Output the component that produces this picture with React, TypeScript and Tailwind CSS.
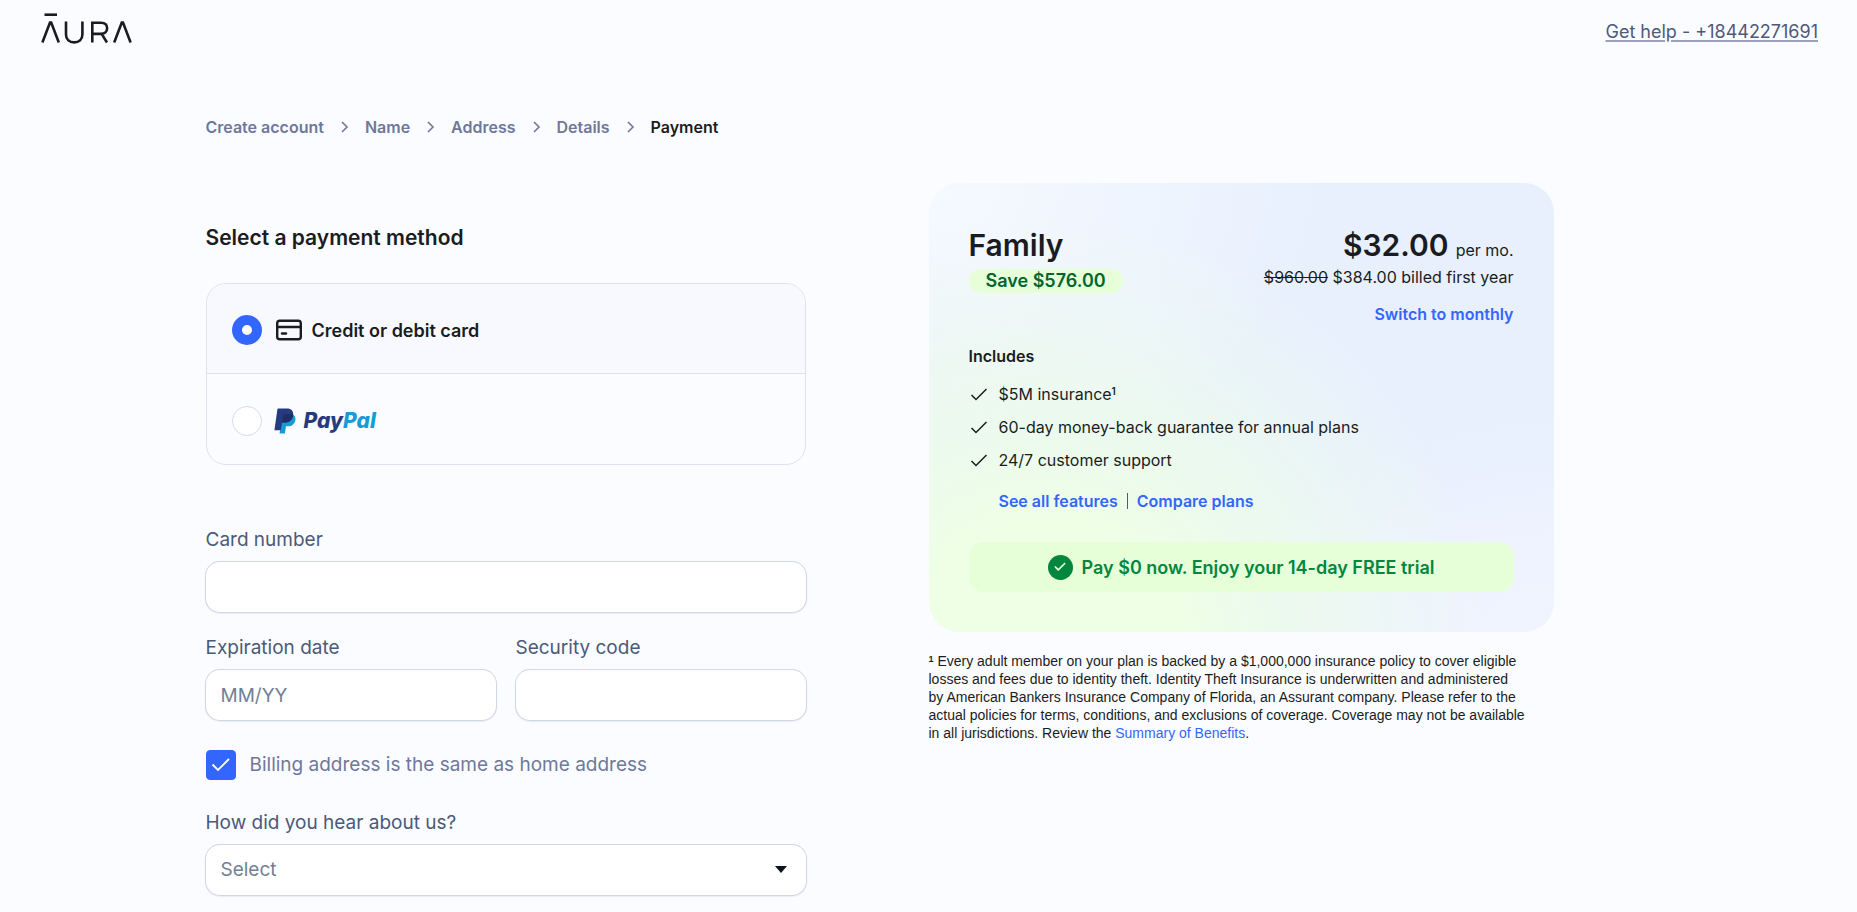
import React, { useState } from "react";
import { Check } from "lucide-react";

const steps = ["Create account", "Name", "Address", "Details", "Payment"];

const field =
  "block h-[50px] w-full rounded-[14px] bg-white px-[15px] text-[19px] text-[#4a5a78] placeholder:text-[#718096] ring-1 ring-[#cfd6e6] shadow-[0_1px_1px_1px_rgba(207,214,230,0.4)] outline-none focus:ring-2 focus:ring-[#3366ff]";
const label = "mb-2.5 block text-[19px] leading-6 text-[#4a5a78]";

function AuraLogo() {
  return (
    <svg width="92" height="32" viewBox="0 0 92 32" fill="none" stroke="#1a1c22" strokeWidth="2.6" role="img" aria-label="Aura">
      <path d="M3.5 1.7H16" />
      <path d="M1.4 29.5 9 9.6h1.2l7.6 19.9" />
      <path d="M25 8.5v13c0 5 3.4 7.9 8.2 7.9s8.2-2.9 8.2-7.9v-13" />
      <path d="M51.3 29.5V9.8h8.6c3.9 0 6.2 2.1 6.2 5.5s-2.3 5.6-6.2 5.6h-8.6M60.6 20.9l5.4 8.6" />
      <path d="M73.2 29.5 80.8 9.6H82l7.6 19.9" />
    </svg>
  );
}

function PayPalLogo() {
  return (
    <span className="flex items-center gap-2">
      <svg width="22" height="26" viewBox="0 0 22 26" aria-hidden="true">
        <path fill="#179bd7" d="M9 6.2h9.4c2.4 1.2 3.4 3.2 3 5.8-.8 4.2-3.6 6.3-7.4 6.3h-2l-1.1 7.100H5.500z" />
        <path fill="#253b80" d="M4.3.4H13c4.2 0 6.8 2.5 6.2 6.900-.8 4.900-3.900 7.300-8.200 7.300H8.100L6.800 22.300H.4L3.400 1.200c.1-.5.4-.8.9-.8z" />
        <path fill="#222d65" d="M10.3 6.2h7.3c.7 0 1.2.2 1.6.6-.7 5.200-3.900 7.800-8.200 7.800H8.100l1.200-7.500c.1-.6.4-.9 1-.9z" />
      </svg>
      <span className="text-[21px] leading-6 font-extrabold text-[#253b80] italic">
        Pay<span className="text-[#179bd7]">Pal</span>
      </span>
    </span>
  );
}

function CardIcon() {
  return (
    <svg width="26" height="22" viewBox="0 0 26 22" fill="none" stroke="#1a1c22" strokeWidth="2.4" aria-hidden="true">
      <rect x="1.2" y="1.7" width="23.6" height="18.6" rx="2.6" />
      <path d="M1.2 8h23.6" />
      <path d="M6 14.5h4" strokeLinecap="round" />
    </svg>
  );
}

export default function App() {
  const [method, setMethod] = useState("card");
  const [sameAddress, setSameAddress] = useState(true);
  const radio =
    "m-0 size-[30px] shrink-0 appearance-none rounded-full border border-[#d5d9e8] bg-white checked:border-[10px] checked:border-[#3366ff]";
  const row = "flex h-[90px] items-center pl-[25px] pt-[3px] cursor-pointer";

  return (
    <div className="min-h-screen bg-[#fbfcff] pb-4 font-[Inter,sans-serif] text-[#1a1c22]">
      <header className="flex h-[62px] items-center justify-between pr-[39px] pl-[41px]">
        <a href="#" className="-mt-1">
          <AuraLogo />
        </a>
        <a href="tel:+18442271691" className="text-[18px] text-[#4f5978] underline decoration-[#9ba1bb] decoration-2 underline-offset-2">
          Get help - +18442271691
        </a>
      </header>

      <div className="mx-auto max-w-[1446px]">
        <nav aria-label="Progress" className="pt-[53px]">
          <ol className="flex items-center">
            {steps.map((s, i) => (
              <li key={s} className="flex items-center text-[16px] leading-6 font-semibold">
                {i > 0 && (
                  <svg width="41" height="12" viewBox="0 0 41 12" fill="none" stroke="#6f7899" strokeWidth="1.6" aria-hidden="true">
                    <path d="m18 1 5 5-5 5" />
                  </svg>
                )}
                <span className={i === steps.length - 1 ? "text-[#1a1c22]" : "text-[#6f7899]"}>{s}</span>
              </li>
            ))}
          </ol>
        </nav>

        <main className="mt-11 grid grid-cols-2">
          <form className="max-w-[600px] pt-[41px]">
            <h1 className="text-[21px] leading-7 font-semibold">Select a payment method</h1>

            <div role="radiogroup" aria-label="Payment method" className="mt-[31px] overflow-hidden rounded-[20px] border border-[#dfe2ee]">
              <label className={`${row} border-b border-[#dfe2ee] bg-[#f8f9fe]`}>
                <input type="radio" name="method" className={radio} checked={method === "card"} onChange={() => setMethod("card")} />
                <span className="flex items-center gap-2.5 pl-3.5 text-[18px] font-semibold">
                  <CardIcon />
                  Credit or debit card
                </span>
              </label>
              <label className={row}>
                <input type="radio" name="method" className={radio} checked={method === "paypal"} onChange={() => setMethod("paypal")} />
                <span className="pl-3">
                  <PayPalLogo />
                </span>
              </label>
            </div>

            <div className="mt-[63px]">
              <label htmlFor="card" className={label}>Card number</label>
              <input id="card" inputMode="numeric" className={field} />
            </div>

            <div className="mt-6 grid grid-cols-2 gap-5">
              <div>
                <label htmlFor="exp" className={label}>Expiration date</label>
                <input id="exp" placeholder="MM/YY" className={field} />
              </div>
              <div>
                <label htmlFor="cvc" className={label}>Security code</label>
                <input id="cvc" className={field} />
              </div>
            </div>

            <label className="mt-[30px] flex items-center gap-3.5 text-[19px] text-[#6f7899]">
              <span className="relative flex size-[30px] shrink-0">
                <input
                  type="checkbox"
                  checked={sameAddress}
                  onChange={(e) => setSameAddress(e.target.checked)}
                  className="peer m-0 size-full appearance-none rounded-[4px] border border-[#cfd6e6] bg-white checked:border-[#3366ff] checked:bg-[#3366ff]"
                />
                <svg viewBox="0 0 30 30" fill="none" stroke="white" strokeWidth="1.8" className="pointer-events-none absolute inset-0 opacity-0 peer-checked:opacity-100" aria-hidden="true">
                  <path d="m6.5 14.5 5.5 5.5L23 9" />
                </svg>
              </span>
              Billing address is the same as home address
            </label>

            <div className="mt-[31px]">
              <label htmlFor="source" className={label}>How did you hear about us?</label>
              <div className="relative">
                <select id="source" defaultValue="" className={`${field} appearance-none text-[#718096]`}>
                  <option value="">Select</option>
                  <option value="friend">Friend or family</option>
                  <option value="search">Search engine</option>
                </select>
                <svg width="12" height="7" viewBox="0 0 12 7" className="pointer-events-none absolute top-[21px] right-[19px]" aria-hidden="true">
                  <path d="M0 0h12L6 7z" fill="#0d1220" />
                </svg>
              </div>
            </div>
          </form>

          <aside className="max-w-[625px]">
            <section className="rounded-[30px] bg-[#e8f0fe] bg-[radial-gradient(circle_at_18%_108%,#eeffe6_0%,#eeffe6_20%,rgba(238,255,230,0)_64%),radial-gradient(ellipse_at_0%_0%,#f6faff_0%,rgba(246,250,255,0)_45%),radial-gradient(ellipse_at_100%_100%,#f1f4ff_0%,rgba(241,244,255,0)_35%)] bg-no-repeat px-10 pt-11 pb-10">
              <div className="flex justify-between">
                <div>
                  <h2 className="text-[30px] leading-9 font-semibold">Family</h2>
                  <p className="mt-1.5 rounded-full bg-[#e7ffd9] px-[17px] text-[18px] leading-6 font-semibold text-[#00652f]">Save $576.00</p>
                </div>
                <div className="text-right text-[16px] leading-6">
                  <p className="flex items-baseline justify-end gap-[7px]">
                    <span className="text-[30px] leading-9 font-semibold">$32.00</span>
                    <span>per mo.</span>
                  </p>
                  <p className="mt-0.5"><s>$960.00</s> $384.00 billed first year</p>
                  <button type="button" className="mt-[13px] block w-full text-right font-semibold text-[#3366ff]">Switch to monthly</button>
                </div>
              </div>

              <h3 className="mt-[18px] text-[16px] leading-6 font-semibold">Includes</h3>
              <ul className="mt-3.5 flex flex-col gap-[9px] text-[16px] leading-6">
                {["$5M insurance", "60-day money-back guarantee for annual plans", "24/7 customer support"].map((t, i) => (
                  <li key={t} className="flex items-center gap-2.5">
                    <svg width="20" height="20" viewBox="0 0 20 20" fill="none" stroke="#1a1c22" strokeWidth="1.5" className="shrink-0" aria-hidden="true">
                      <path d="m2.500 11 4.500 4.500L17.500 5" />
                    </svg>
                    <span>{t}{i === 0 && <sup className="text-[10px] leading-none font-semibold">1</sup>}</span>
                  </li>
                ))}
              </ul>
              <p className="mt-[17px] flex items-center gap-[9px] pl-[30px] text-[16px] leading-6 font-semibold text-[#3366ff]">
                <a href="#">See all features</a>
                <span className="h-4 w-px bg-[#4f5978]" />
                <a href="#">Compare plans</a>
              </p>
              <div className="mt-[29px] flex h-[50px] items-center justify-center gap-[9px] rounded-[14px] bg-[#e7ffd9] text-[18px] font-semibold text-[#00873f]">
                <span className="flex size-[25px] items-center justify-center rounded-full bg-[#00873f] text-[#e7ffd9]">
                  <Check size={14} strokeWidth={3} />
                </span>
                Pay $0 now. Enjoy your 14-day FREE trial
              </div>
            </section>
            <p className="mt-5 font-['Liberation_Sans',sans-serif] text-[14px] leading-[18px]">
              <sup className="text-[9px] leading-none font-bold">1</sup> Every adult member on your plan is backed by a $1,000,000 insurance policy to cover eligible
              <br />
              losses and fees due to identity theft. Identity Theft Insurance is underwritten and administered
              <br />
              by American Bankers Insurance Company of Florida, an Assurant company. Please refer to the
              <br />
              actual policies for terms, conditions, and exclusions of coverage. Coverage may not be available
              <br />
              in all jurisdictions. Review the <a href="#" className="text-[#3366ff]">Summary of Benefits</a>.
            </p>
          </aside>
        </main>
      </div>
    </div>
  );
}
